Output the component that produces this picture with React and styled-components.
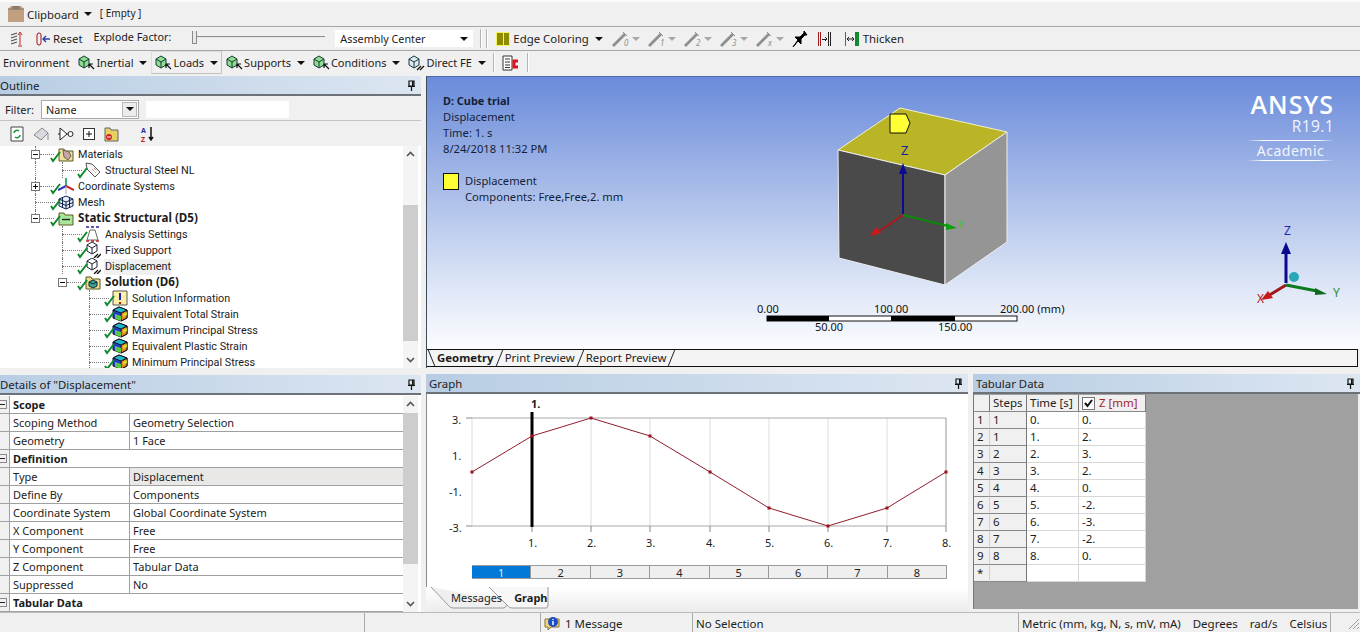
import React from "react";
import styled, { createGlobalStyle } from "styled-components";

const Global = createGlobalStyle`
  html, body { margin: 0; padding: 0; background: #f0f0f0; }
  body { font-family: "Noto Sans", "Open Sans", sans-serif; font-size: 11px; color: #1c1c1c; }
  * { box-sizing: border-box; }
`;

const Page = styled.div`
  width: 1360px; height: 632px; overflow: hidden; display: flex; flex-direction: column; background: #f0f0f0;
`;
const ToolRow = styled.div`
  height: ${p => p.$h}px; flex: none; display: flex; align-items: center; white-space: nowrap;
  padding: 0 0 ${p => p.$pb || 0}px ${p => p.$pl || 0}px;
  border-bottom: ${p => (p.$line ? "1px solid #a6a6a6" : "none")};
  border-top: ${p => (p.$top ? "2px solid #fafafa" : "none")};
  font-size: ${p => p.$fs || 11.4}px;
`;
const Gap = styled.span`
  flex: none; width: ${p => p.$w}px;
`;
const SmallLabel = styled.span`
  font-size: ${p => p.$fs || 10.8}px; position: relative; top: ${p => -p.$up}px;
`;
const Arrow = styled.span`
  flex: none; width: 0; height: 0; margin-left: ${p => p.$ml ?? 6}px;
  border-left: 4px solid transparent; border-right: 4px solid transparent;
  border-top: 4px solid ${p => (p.$off ? "#a8a8a8" : "#111")};
`;
const Sep = styled.span`
  flex: none; width: 1px; height: 19px; background: #b4b4b4; box-shadow: 1px 0 0 #fff;
`;
const ToolBox = styled.span`
  flex: none; display: inline-flex; align-items: center; height: 23px; padding: 0 3px;
  border-right: 1px solid ${p => (p.$on ? "#c0c0c0" : "transparent")};
  border-left: 1px solid ${p => (p.$on ? "#dcdcdc" : "transparent")};
  border-bottom: 1px solid ${p => (p.$on ? "#c0c0c0" : "transparent")};
  border-top: 1px solid ${p => (p.$on ? "#dcdcdc" : "transparent")};
`;
const Slider = styled.div`
  flex: none; position: relative; width: 133px; height: 2px; background: #8f8f8f; border-bottom: 1px solid #e8e8e8; top: -2px;
  &::before { content: ""; position: absolute; left: 0; top: -5px; width: 3px; height: 12px; background: #e9e9e9; border: 1px solid #8a8a8a; border-top: none; }
`;
const Combo = styled.div`
  flex: none; width: ${p => p.$w}px; height: ${p => p.$h || 17}px; background: #fff; display: flex; align-items: center;
  justify-content: space-between; padding: 0 5px 0 ${p => p.$pad || 5}px; font-size: 10.8px;
  border: ${p => (p.$border ? "1px solid #a8a8a8" : "none")};
`;
const ComboButton = styled.span`
  display: flex; align-items: center; justify-content: center; width: 15px; height: 15px; background: #ececec;
  margin-right: -4px; border: 1px solid #b8b8b8;
`;

const Main = styled.div`
  flex: none; height: 536px; display: flex; gap: 5px;
`;
const Column = styled.div`
  flex: none; width: ${p => p.$w}px; display: flex; flex-direction: column; gap: ${p => p.$gap}px;
`;
const Panel = styled.section`
  flex: ${p => (p.$h || p.$w ? "none" : 1)}; height: ${p => (p.$h ? p.$h + "px" : "auto")}; width: ${p => (p.$w ? p.$w + "px" : "auto")};
  min-width: 0; min-height: 0; display: flex; flex-direction: column; overflow: hidden;
`;
const PanelHead = styled.header`
  flex: none; height: 20px; display: flex; align-items: center; justify-content: space-between; padding: 0 5px 0 ${p => p.$pl ?? 3}px;
  background: linear-gradient(90deg, #b8cde4 0%, #dce6f1 100%); border-bottom: 2px solid #6d7278; font-size: 11.4px; color: #222;
`;
const FilterRow = styled.div`
  flex: none; height: 25px; display: flex; align-items: center; padding: 2px 0 0 5px; gap: 7px; border-bottom: 1px solid #c4c4c4;
`;
const FilterBox = styled.div`
  flex: none; width: 143px; height: 17px; background: #fff;
`;
const IconBar = styled.div`
  flex: none; height: 25px; display: flex; align-items: center; padding-left: 10px; gap: 9px;
`;
const SortIcon = styled.svg`
  overflow: visible;
`;
const ScrollArea = styled.div`
  flex: 1; min-height: 0; display: flex; background: #fff; padding-top: ${p => p.$pt || 0}px;
`;
const TreeBody = styled.div`
  flex: 1; min-width: 0; overflow: hidden; position: relative; font-family: Roboto, "Noto Sans", sans-serif; font-size: 10.8px;
`;
const TreeRow = styled.div`
  height: 16px; display: flex; align-items: center; padding-left: ${p => p.$x}px; position: relative; white-space: nowrap;
  font-weight: ${p => (p.$bold ? 700 : 400)};
  font-family: ${p => (p.$bold ? '"Noto Sans", sans-serif' : "inherit")};
  font-size: ${p => (p.$bold ? "11.6px" : "inherit")};
`;
const TreeLabel = styled.span`
  position: relative; top: ${p => (p.$bold ? 0 : 1)}px; margin-left: 3px; padding: 0 1px; line-height: 16px; background: ${p => (p.$sel ? "#f0f0f0" : "transparent")};
`;
const VGuide = styled.span`
  position: absolute; left: ${p => p.$x}px; top: 0; height: ${p => (p.$half ? 8 : 16)}px; border-left: 1px dotted #777;
`;
const HGuide = styled.span`
  position: absolute; left: ${p => p.$x}px; top: 8px; width: ${p => p.$w}px; border-top: 1px dotted #777;
`;
const Expander = styled.span`
  position: absolute; left: ${p => p.$x}px; top: 4px; width: 9px; height: 9px; background: #fff; border: 1px solid #777;
  &::before { content: ""; position: absolute; left: 1px; top: 3px; width: 5px; height: 1px; background: #111; }
  &::after { content: ""; display: ${p => (p.$plus ? "block" : "none")}; position: absolute; left: 3px; top: 1px; width: 1px; height: 5px; background: #111; }
`;
const IconSlot = styled.span`
  position: relative; flex: none; width: 16px; height: 16px; display: block;
`;
const Tick = styled.svg`
  position: absolute; left: -8px; top: 5px;
`;
const Scroll = styled.div`
  flex: none; width: 15px; margin-right: ${p => p.$mr || 0}px; position: relative; background: #f4f4f4; display: flex; flex-direction: column; justify-content: space-between; align-items: center;
`;
const ScrollThumb = styled.div`
  position: absolute; left: 0; right: 0; top: ${p => p.$top}px; height: ${p => p.$h}px; background: #cdcdcd;
`;
const ScrollBtn = styled.svg`
  position: relative; margin: 5px 0;
`;

const DetailsTable = styled.div`
  flex: 1; min-width: 0; overflow: hidden;
`;
const DetailRow = styled.div`
  height: 18px; display: grid; grid-template-columns: 10px 120px 1fr; align-items: stretch; border-bottom: 1px solid #a0a0a0;
`;
const Gutter = styled.div`
  background: #f0f0f0; display: flex; align-items: center; border-right: 1px solid #a0a0a0; position: relative;
`;
const Minus = styled.span`
  width: 7px; height: 9px; border: 1px solid #8a8a8a; border-left: none; position: relative;
  &::before { content: ""; position: absolute; left: 0; top: 3px; width: 5px; height: 1px; background: #222; }
`;
const Cell = styled.div`
  padding-left: ${p => p.$pl ?? 3}px; line-height: 17px; overflow: hidden; white-space: nowrap;
  grid-column: ${p => (p.$span ? "2 / 4" : "auto")};
  font-weight: ${p => (p.$bold ? 700 : 400)};
  background: ${p => (p.$sel ? "#e9e8e6" : "#fff")};
  border-right: ${p => (p.$line ? "1px solid #a0a0a0" : "none")};
`;

const Viewport = styled.section`
  height: 292px; display: flex; flex-direction: column; border-left: 1px solid #3f4a5a; border-top: 1px solid #4f6aa8;
`;
const Canvas = styled.div`
  flex: none; height: 272px; position: relative; overflow: hidden; padding: 16px 0 0 16px; line-height: 16px;
  background: linear-gradient(180deg, #6a8bdb 0%, #a7bbe8 40%, #dbe4f6 75%, #fbfcfe 100%);
  color: #131f38; font-size: 11.2px;
`;
const ViewSvg = styled.svg`
  position: absolute; left: 0; top: 0;
`;
const AnnoTitle = styled.div`
  font-weight: 700; font-size: 10.9px;
`;
const Legend = styled.div`
  display: flex; gap: 6px; margin-top: 16px;
`;
const Swatch = styled.span`
  flex: none; width: 16px; height: 17px; background: #ffff33; border: 1px solid #111;
`;
const Logo = styled.div`
  position: absolute; right: 26px; top: 14px; width: 87px; text-align: right; color: #fff;
`;
const LogoName = styled.div`
  font-size: 25px; line-height: 26px; font-family: "Open Sans", sans-serif; letter-spacing: 1px; font-weight: 600;
`;
const LogoVer = styled.div`
  font-size: 15.5px; line-height: 16px; margin-top: 1px; font-family: "Open Sans", sans-serif; letter-spacing: .4px; color: #f1f4fc;
`;
const LogoEdition = styled.div`
  margin-top: 6px; height: 21px; text-align: center; font-size: 14px; line-height: 19px; letter-spacing: .5px; color: #f1f4fc;
  border-top: 1px solid; border-bottom: 1px solid; border-image: linear-gradient(90deg, transparent, #fff 20%, #fff 80%, transparent) 1;
`;
const ViewTabs = styled.div`
  flex: none; height: 18px; display: flex; align-items: center; background: #f4f4f4; border: 1px solid #111; border-left: none; margin-right: 2px;
  padding-left: 7px; font-size: 11.4px;
`;
const ViewTab = styled.span`
  position: relative; padding: 0 8px 0 3px; line-height: 16px; font-weight: ${p => (p.$on ? 700 : 400)}; white-space: nowrap;
  &::after { content: ""; position: absolute; right: 2px; top: 0; height: 16px; border-right: 1px solid #222; transform: skewX(-22deg); }
  &::before { content: ""; display: ${p => (p.$on ? "block" : "none")}; position: absolute; left: -3px; top: 0; height: 16px; border-left: 1px solid #222; transform: skewX(22deg); }
`;

const BottomRow = styled.div`
  flex: 1; min-height: 0; display: flex; gap: 5px;
`;
const GraphBody = styled.div`
  flex: none; height: 193px; background: #fff; border-left: 1px solid #8a8a8a;
`;
const ChartSvg = styled.svg`
  display: block;
`;
const StepBar = styled.div`
  display: flex; margin: 1px 0 0 45px; width: 475px; height: 14px; border: 1px solid #9a9a9a; border-left: none;
`;
const StepCell = styled.span`
  flex: 1; display: flex; align-items: center; justify-content: center; font-size: 11px; line-height: 1;
  background: ${p => (p.$on ? "#0078d7" : "#efefef")}; color: ${p => (p.$on ? "#dfeeff" : "#222")};
  border-right: 1px solid #9a9a9a;
  &:last-child { border-right: none; }
`;
const BottomTabs = styled.div`
  flex: 1; position: relative; display: flex; align-items: flex-start; padding: 2px 0 0 25px; background: linear-gradient(#fff, #ececec); font-size: 11px;
`;
const TabShapes = styled.svg`
  position: absolute; left: 0; top: 0;
`;
const BottomTab = styled.span`
  position: relative; line-height: 18px; margin-right: ${p => (p.$on ? 0 : 12)}px; font-weight: ${p => (p.$on ? 700 : 400)};
`;

const TabWrap = styled.div`
  flex: 1; background: #a0a0a0; overflow: hidden; display: flex; flex-direction: column; margin: 0 2px 3px 0; padding-top: 1px; border-left: 1px solid #777;
`;
const DataGrid = styled.div`
  width: 172px; display: grid; grid-template-columns: 16px 37px 52px 67px; grid-auto-rows: 17px; font-size: 11.5px; background: #fff;
`;
const HeadCell = styled.div`
  background: #f0f0f0; border-right: 1px solid ${p => (p.$dark ? "#777" : "#d0d0d0")}; border-bottom: 1px solid #888; line-height: 16px; padding-left: ${p => p.$pl ?? 3}px;
  color: ${p => (p.$red ? "#a5262a" : "#222")}; display: flex; align-items: center; gap: 4px; white-space: nowrap;
`;
const DataCell = styled.div`
  background: #fff; border-right: 1px solid #d8d8d8; border-bottom: 1px solid #d8d8d8; line-height: 16px; padding-left: 3px;
`;
const CheckBox = styled.span`
  width: 13px; height: 13px; border: 1px solid #777; background: #fff; display: flex; align-items: center; justify-content: center; margin-left: 1px;
`;

const Status = styled.footer`
  flex: 1; display: flex; align-items: stretch; font-size: 11.5px; border-top: 1px solid #bbb; background: #f0f0f0; white-space: nowrap;
`;
const StatusCell = styled.div`
  flex: none; width: ${p => p.$w}px; border-left: ${p => (p.$line ? "1px solid #a9a9a9" : "none")}; display: flex; align-items: center; padding: 2px 0 0 ${p => p.$pl ?? 3}px; gap: ${p => p.$gap || 0}px;
  justify-content: ${p => (p.$end ? "flex-end" : "flex-start")};
`;

/* ---- icons ---- */
const LoadIcon = ({ direct }) => (
  <svg width="17" height="17" viewBox="0 0 17 17">
    <path d="M1 5l5-3 5 3v6l-5 3-5-3z" fill={direct ? "#dfe7ef" : "#8fdc8f"} stroke="#143a3a" />
    <path d="M1 5l5 3 5-3M6 8v6" fill="none" stroke="#143a3a" />
    {direct ? <path d="M9 16l4-4M12 16l4-4" stroke="#111" strokeWidth="1.3" /> : <path d="M11 10l5 5M11 10v4M11 10h4" stroke="#111" strokeWidth="1.2" fill="none" />}
  </svg>
);
const OffEdge = ({ n }) => (
  <svg width="20" height="16" viewBox="0 0 20 16">
    <path d="M1 15L13 3" stroke="#8f8f8f" strokeWidth="2.8" />
    <path d="M11 1l4 4" stroke="#8f8f8f" />
    <text x="12" y="15" fontSize="8" fontStyle="italic" fill="#8f8f8f" fontFamily="Noto Sans, sans-serif">{n}</text>
  </svg>
);
const ArrowCheck = () => (
  <Tick width="12" height="12" viewBox="0 0 12 12"><path d="M1 7l2 3 7-9" fill="none" stroke="#118a2e" strokeWidth="2" /></Tick>
);
const Chev = ({ up }) => (
  <ScrollBtn width="9" height="6" viewBox="0 0 9 6"><path d={up ? "M1 5l3.5-3.5L8 5" : "M1 1l3.5 3.5L8 1"} fill="none" stroke="#555" strokeWidth="1.6" /></ScrollBtn>
);
const Pin = () => (
  <svg width="9" height="11" viewBox="0 0 9 11"><path d="M2 1h5v5H2zM1 6.5h7M4.5 7v4" fill="none" stroke="#111" strokeWidth="1.2" /><path d="M5 1h1.5v5H5z" fill="#111" /></svg>
);
const Folder = ({ fill, children }) => (
  <svg width="16" height="16" viewBox="0 0 16 16">
    <path d="M1 3h5l1 2h8v10H1z" fill={fill} stroke="#5a5a22" />
    {children}
  </svg>
);
const treeIcons = {
  materials: <Folder fill="#efdf9a"><path d="M5 4l6 2 2 4-3 4-4-3z" fill="#c9a4a4" stroke="#665" /></Folder>,
  tag: <svg width="16" height="16" viewBox="0 0 16 16"><path d="M1 1l6 1 8 8-5 5-8-8z" fill="#f7f7f7" stroke="#555" /><path d="M7 7l4 4M9 6l3 3" stroke="#b55" strokeDasharray="1 1" /></svg>,
  coord: <svg width="16" height="16" viewBox="0 0 16 16"><path d="M8 8V0" stroke="#2aa070" strokeWidth="1.8" /><path d="M8 8L0 12" stroke="#2233bb" strokeWidth="2" /><path d="M8 8l8 4" stroke="#cc2222" strokeWidth="2" /><path d="M8 8v8" stroke="#aaa" /></svg>,
  mesh: <svg width="16" height="16" viewBox="0 0 16 16"><path d="M1 5l7-3 7 3v7l-7 3-7-3z" fill="#e8eefa" stroke="#11224a" /><path d="M1 5l7 3 7-3M8 8v7M4.5 3.5v10M11.5 3.5v10M1 8.5l7 3 7-3" fill="none" stroke="#11224a" /></svg>,
  static: <Folder fill="#a9e59a"><path d="M4 9.5h8" stroke="#222" strokeWidth="1.4" /></Folder>,
  analysis: <svg width="16" height="16" viewBox="0 0 16 16"><path d="M1 1h3M6 1h3M11 1h3" stroke="#22229a" strokeWidth="1.5" /><path d="M2 14L5 4h5l3 10M2 14h11" fill="none" stroke="#666" /><path d="M1 15h3M6 15h3M11 15h3" stroke="#b22" strokeWidth="1.5" /></svg>,
  support: <svg width="16" height="16" viewBox="0 0 16 16"><path d="M2 3l5-3 5 3v6l-5 3-5-3z" fill="#fff" stroke="#223" /><path d="M2 3l5 3 5-3M7 6v6" fill="none" stroke="#223" /><path d="M9 16l4-4M12 16l4-4" stroke="#111" strokeWidth="1.4" /></svg>,
  solution: <Folder fill="#f0dc8c"><path d="M4 8l4-2 4 2v4l-4 2-4-2z" fill="#3aa88c" stroke="#124" /><path d="M4 8l4 2 4-2" fill="none" stroke="#124" /></Folder>,
  info: <svg width="16" height="16" viewBox="0 0 16 16"><path d="M1 1h14v14H1z" fill="#fdf0a6" stroke="#555" /><path d="M8 3v7" stroke="#1a22c0" strokeWidth="2" /><path d="M8 12v2" stroke="#b11" strokeWidth="2" /></svg>,
  result: <svg width="16" height="16" viewBox="0 0 16 16"><path d="M1 4l6-3 8 3v8l-6 3-8-3z" fill="#1f3fd0" stroke="#112" /><path d="M9 7l6-3v8l-6 3z" fill="#e88b1c" stroke="#112" /><path d="M1 4l8 3 6-3-8-3z" fill="#22b8c8" stroke="#112" /><path d="M3 8l6 2v5l-6-2z" fill="#58c848" /><path d="M11 8l4-2v3l-4 2z" fill="#d8d828" /></svg>,
};

const treeData = [
  { l: "Materials", x: 58, icon: "materials", exp: 31, g: [35] },
  { l: "Structural Steel NL", x: 85, icon: "tag", g: [35, 62], h: [62, 20] },
  { l: "Coordinate Systems", x: 58, icon: "coord", exp: 31, plus: true, g: [35] },
  { l: "Mesh", x: 58, icon: "mesh", g: [35], h: [35, 20] },
  { l: "Static Structural (D5)", x: 58, icon: "static", bold: true, exp: 31, half: true },
  { l: "Analysis Settings", x: 85, icon: "analysis", g: [62], h: [62, 20] },
  { l: "Fixed Support", x: 85, icon: "support", g: [62], h: [62, 20] },
  { l: "Displacement", x: 85, icon: "support", sel: true, g: [62], h: [62, 20] },
  { l: "Solution (D6)", x: 85, icon: "solution", bold: true, exp: 58 },
  { l: "Solution Information", x: 112, icon: "info", g: [89], h: [89, 20] },
  { l: "Equivalent Total Strain", x: 112, icon: "result", g: [89], h: [89, 20] },
  { l: "Maximum Principal Stress", x: 112, icon: "result", g: [89], h: [89, 20] },
  { l: "Equivalent Plastic Strain", x: 112, icon: "result", g: [89], h: [89, 20] },
  { l: "Minimum Principal Stress", x: 112, icon: "result", g: [89], h: [89, 20] },
];

const details = [
  { h: "Scope" },
  { k: "Scoping Method", v: "Geometry Selection" },
  { k: "Geometry", v: "1 Face" },
  { h: "Definition" },
  { k: "Type", v: "Displacement", sel: true },
  { k: "Define By", v: "Components" },
  { k: "Coordinate System", v: "Global Coordinate System" },
  { k: "X Component", v: "Free" },
  { k: "Y Component", v: "Free" },
  { k: "Z Component", v: "Tabular Data" },
  { k: "Suppressed", v: "No" },
  { h: "Tabular Data" },
];

const tab = [["1", "1", "0.", "0."], ["2", "1", "1.", "2."], ["3", "2", "2.", "3."], ["4", "3", "3.", "2."], ["5", "4", "4.", "0."], ["6", "5", "5.", "-2."], ["7", "6", "6.", "-3."], ["8", "7", "7.", "-2."], ["9", "8", "8.", "0."], ["*", "", "", ""]];

const chartPts = [[472, 472], [532, 436], [591, 418], [650, 436], [710, 472], [769, 508], [828, 526], [887, 508], [946, 472]];

function GraphChart() {
  const xs = chartPts.map(p => p[0]);
  return (
    <ChartSvg width="540" height="170" viewBox="427 394 540 170">
      {xs.map(x => <line key={x} x1={x} x2={x} y1="418" y2="526" stroke="#dcdcdc" />)}
      <path d="M472 418H946V526H472" fill="none" stroke="#a8a8a8" />
      {[418, 526].map(y => <line key={y} x1="466" x2="472" y1={y} y2={y} stroke="#888" />)}
      {xs.slice(1).map(x => <line key={x} x1={x} x2={x} y1="526" y2="532" stroke="#888" />)}
      <line x1="532" x2="532" y1="412" y2="527" stroke="#000" strokeWidth="3" />
      <polyline points={chartPts.map(p => p.join(",")).join(" ")} fill="none" stroke="#8f1d2c" />
      {chartPts.map(p => <rect key={p[0]} x={p[0] - 1.5} y={p[1] - 1.5} width="3" height="3" fill="#a01020" />)}
      <g fontSize="11" fill="#222" fontFamily="Noto Sans, sans-serif">
        <text x="531" y="408" fontWeight="700">1.</text>
        <text x="452" y="424">3.</text><text x="452" y="460">1.</text><text x="449" y="496">-1.</text><text x="449" y="532">-3.</text>
        {xs.slice(1).map((x, i) => <text key={x} x={x - 4} y="547">{i + 1}.</text>)}
      </g>
    </ChartSvg>
  );
}

function ViewDrawing() {
  return (
    <ViewSvg width="934" height="272" viewBox="427 77 934 272">
      <path d="M838 150L900 108 1007 132 945 175z" fill="#b9b526" stroke="#f4f2c8" />
      <path d="M838 150L945 175V285L839 258z" fill="#4a4a4a" stroke="#eee" />
      <path d="M945 175L1007 132V242L945 285z" fill="#959595" stroke="#eee" />
      <path d="M890 114h16l4 9-4 10h-16z" fill="#ffff33" stroke="#111" />
      <path d="M903 214V166" stroke="#0a0a96" strokeWidth="2" />
      <path d="M899 174l4-11 4 11z" fill="#0a0a96" />
      <text x="901" y="155" fontSize="13" fill="#1a1aa0" fontFamily="Noto Sans, sans-serif">Z</text>
      <path d="M903 215L878 232" stroke="#b01818" strokeWidth="2" /><path d="M870 236l6-9 5 6z" fill="#d01818" />
      <path d="M903 215L948 226" stroke="#0a8a0a" strokeWidth="2" /><path d="M957 228l-11-5v7z" fill="#0ca00c" />
      <text x="958" y="228" fontSize="10" fill="#3c3" fontFamily="Noto Sans, sans-serif">Y</text>

      <path d="M1286 283V248" stroke="#0a0a90" strokeWidth="3" />
      <path d="M1281 254l5-12 5 12z" fill="#0a0a90" />
      <text x="1284" y="235" fontSize="12" fill="#2222b0" fontFamily="Noto Sans, sans-serif">Z</text>
      <circle cx="1294" cy="277" r="5" fill="#2aa8b8" />
      <path d="M1286 285L1268 296" stroke="#a01818" strokeWidth="3" /><path d="M1261 300l7-9 5 7z" fill="#c81818" />
      <path d="M1286 285L1317 291" stroke="#0e7a1e" strokeWidth="3" /><path d="M1327 294l-12-6v7z" fill="#0e6a1e" />
      <text x="1333" y="297" fontSize="12" fill="#2a8a3a" fontFamily="Noto Sans, sans-serif">Y</text>
      <text x="1257" y="303" fontSize="12" fill="#b82020" fontFamily="Noto Sans, sans-serif">X</text>

      <rect x="767" y="316" width="250" height="5" fill="#fff" stroke="#111" />
      <rect x="767" y="316" width="62" height="5" fill="#000" />
      <rect x="891" y="316" width="64" height="5" fill="#000" />
      <g fontSize="11" fill="#111" fontFamily="Noto Sans, sans-serif">
        <text x="757" y="313">0.00</text><text x="874" y="313">100.00</text><text x="1000" y="313">200.00 (mm)</text>
        <text x="815" y="331">50.00</text><text x="938" y="331">150.00</text>
      </g>
    </ViewSvg>
  );
}

export default function App() {
  return (
    <Page>
      <Global />
      <ToolRow $h={27} $pl={8} $line $top>
        <svg width="16" height="16" viewBox="0 0 16 16"><path d="M0 3l3-3h10l3 3v13H0z" fill="#c0a080" /><path d="M0 3h16M5 0h6v3H5z" fill="#8a7a6a" stroke="#8a7a6a" /></svg>
        <Gap $w={3} />Clipboard<Arrow $ml={5} /><Gap $w={8} /><SmallLabel $up={1} $fs={10}>[ Empty ]</SmallLabel>
      </ToolRow>
      <ToolRow $h={24} $pl={10} $line>
        <svg width="13" height="16" viewBox="0 0 13 16"><path d="M1 4l6-2M1 7l6-2M1 10l6-2M1 13l6-2" stroke="#555" strokeWidth="1.3" /><path d="M10 14V3M8 4l2-3 2 3M8 15h4" stroke="#b22" fill="none" /></svg>
        <Gap $w={13} />
        <svg width="15" height="14" viewBox="0 0 15 14"><rect x="1" y="1" width="4" height="12" rx="2" fill="none" stroke="#a01010" /><path d="M14 7H7M10 4L7 7l3 3" stroke="#2a40b0" fill="none" strokeWidth="1.4" /></svg>
        <Gap $w={2} />Reset<Gap $w={11} /><SmallLabel $up={2}>Explode Factor:</SmallLabel><Gap $w={21} />
        <Slider /><Gap $w={10} />
        <Combo $w={138}>Assembly Center<Arrow $ml={0} /></Combo><Gap $w={7} /><Sep /><Gap $w={5} /><Sep /><Gap $w={9} />
        <svg width="14" height="14" viewBox="0 0 14 14"><rect width="14" height="14" fill="#f4f460" /><rect x="1" y="1" width="6" height="12" fill="#8f8b00" /><rect x="8" y="1" width="5" height="12" fill="#8f8b00" /></svg>
        <Gap $w={3} />Edge Coloring<Arrow /><Gap $w={9} />
        {["0", "1", "2", "3", "x"].map(n => (
          <React.Fragment key={n}><OffEdge n={n} /><Arrow $ml={0} $off /><Gap $w={8} /></React.Fragment>
        ))}
        <svg width="16" height="18" viewBox="0 0 16 18"><path d="M1 17l5-7-3-3 5 0 4-4 0-2 3 4-2 0-4 4 0 5-3-3z" fill="#000" stroke="#000" /></svg>
        <Gap $w={10} />
        <svg width="14" height="16" viewBox="0 0 14 16" shapeRendering="crispEdges"><path d="M.5 1v14M2.5 1v14" stroke="#a02020" /><path d="M4 8h5M7 6l2 2-2 2" stroke="#222" fill="none" /><path d="M10.5 1v14M12.5 1v14" stroke="#222" /></svg>
        <Gap $w={13} />
        <svg width="14" height="14" viewBox="0 0 14 14"><path d="M.5 0v14" stroke="#1a8a3a" /><path d="M2 7h7M2 7l2-2M2 7l2 2M9 7L7 5M9 7L7 9" stroke="#222" fill="none" /><rect x="10" y="0" width="4" height="14" fill="#138a32" /></svg>
        <Gap $w={4} />Thicken
      </ToolRow>
      <ToolRow $h={25} $pl={3} $pb={2} $fs={11}>
        Environment<Gap $w={5} />
        {[["Inertial", 0], ["Loads", 1], ["Supports", 0], ["Conditions", 0]].map(([t, on]) => (
          <ToolBox key={t} $on={on}><LoadIcon /><Gap $w={1} />{t}<Arrow $ml={6} /></ToolBox>
        ))}
        <ToolBox><LoadIcon direct /><Gap $w={1} />Direct FE<Arrow $ml={6} /></ToolBox>
        <Gap $w={3} /><Sep /><Gap $w={8} />
        <svg width="17" height="16" viewBox="0 0 17 16"><path d="M1 1h9v14H1z" fill="#fff" stroke="#333" /><path d="M3 4h5M3 7h5M3 10h5M3 12.5h5" stroke="#333" /><path d="M16 6h-4v6h4" fill="none" stroke="#e01018" strokeWidth="3" /></svg>
        <Gap $w={8} /><Sep />
      </ToolRow>
      <Main>
        <Column $w={421} $gap={7}>
          <Panel $h={292}>
            <PanelHead $pl={0}>Outline<Pin /></PanelHead>
            <FilterRow>
              Filter:
              <Combo $w={98} $h={19} $border $pad={4}>Name<ComboButton><Arrow $ml={0} /></ComboButton></Combo>
              <FilterBox />
            </FilterRow>
            <IconBar>
              <svg width="14" height="16" viewBox="0 0 14 16"><path d="M1 1h12v14H1z" fill="#fff" stroke="#444" /><path d="M4 7a3 3 0 0 1 5-2M10 9a3 3 0 0 1-5 2" fill="none" stroke="#1a9a3a" strokeWidth="1.6" /></svg>
              <svg width="16" height="14" viewBox="0 0 16 14"><path d="M1 8l8-7 6 5-7 7z" fill="#d8d8e0" stroke="#888" /><path d="M15 6v7" stroke="#888" /></svg>
              <svg width="16" height="14" viewBox="0 0 16 14"><path d="M0 7h2M2 1v12l7-6zM9 7h1" fill="#fff" stroke="#222" /><circle cx="12.5" cy="7" r="2.5" fill="#fff" stroke="#222" /></svg>
              <svg width="12" height="12" viewBox="0 0 12 12"><rect x=".5" y=".5" width="11" height="11" fill="#fff" stroke="#333" /><path d="M3 6h6M6 3v6" stroke="#111" /></svg>
              <svg width="15" height="16" viewBox="0 0 15 16"><path d="M1 2h5l1 2h7v11H1z" fill="#e8cf62" stroke="#666" /><circle cx="5" cy="11" r="3" fill="#d02020" /><path d="M3 11h4" stroke="#fff" /></svg>
              <Gap $w={3} />
              <SortIcon width="14" height="16" viewBox="0 0 14 16"><path d="M11 1v13M9 11l2 3 2-3" stroke="#111" fill="none" strokeWidth="1.5" /><text x="1" y="6.5" fontSize="7" fontWeight="700" fill="#2230a8" fontFamily="Noto Sans, sans-serif">A</text><text x="1" y="15.5" fontSize="7" fontWeight="700" fill="#c02020" fontFamily="Noto Sans, sans-serif">Z</text></SortIcon>
            </IconBar>
            <ScrollArea>
              <TreeBody>
                {treeData.map(r => (
                  <TreeRow key={r.l} $x={r.x} $bold={r.bold}>
                    {(r.g || []).map(x => <VGuide key={x} $x={x} />)}
                    {r.half && <VGuide $x={35} $half />}
                    {r.h && <HGuide $x={r.h[0]} $w={r.h[1]} />}
                    {r.exp && <HGuide $x={r.exp + 9} $w={14} />}
                    {r.exp && <Expander $x={r.exp} $plus={r.plus} />}
                    <IconSlot>{treeIcons[r.icon]}<ArrowCheck /></IconSlot>
                    <TreeLabel $sel={r.sel} $bold={r.bold}>{r.l}</TreeLabel>
                  </TreeRow>
                ))}
              </TreeBody>
              <Scroll $mr={3}><ScrollThumb $top={59} $h={136} /><Chev up /><Chev /></Scroll>
            </ScrollArea>
          </Panel>
          <Panel>
            <PanelHead $pl={0}>Details of "Displacement"<Pin /></PanelHead>
            <ScrollArea $pt={1}>
              <DetailsTable>
                {details.map(d => d.h ? (
                  <DetailRow key={d.h}><Gutter><Minus /></Gutter><Cell $span $bold>{d.h}</Cell></DetailRow>
                ) : (
                  <DetailRow key={d.k}><Gutter /><Cell $line>{d.k}</Cell><Cell $sel={d.sel}>{d.v}</Cell></DetailRow>
                ))}
              </DetailsTable>
              <Scroll $mr={3}><ScrollThumb $top={17} $h={151} /><Chev up /><Chev /></Scroll>
            </ScrollArea>
          </Panel>
        </Column>
        <Column $w={934} $gap={6}>
          <Viewport>
            <Canvas>
              <ViewDrawing />
              <AnnoTitle>D: Cube trial</AnnoTitle>
              <div>Displacement</div>
              <div>Time: 1. s</div>
              <div>8/24/2018 11:32 PM</div>
              <Legend>
                <Swatch />
                <div><div>Displacement</div><div>Components: Free,Free,2. mm</div></div>
              </Legend>
              <Logo>
                <LogoName>ANSYS</LogoName>
                <LogoVer>R19.1</LogoVer>
                <LogoEdition>Academic</LogoEdition>
              </Logo>
            </Canvas>
            <ViewTabs>
              <ViewTab $on>Geometry</ViewTab><ViewTab>Print Preview</ViewTab><ViewTab>Report Preview</ViewTab>
            </ViewTabs>
          </Viewport>
          <BottomRow>
            <Panel $w={542}>
              <PanelHead>Graph<Pin /></PanelHead>
              <GraphBody>
                <GraphChart />
                <StepBar>
                  {[1, 2, 3, 4, 5, 6, 7, 8].map(n => <StepCell key={n} $on={n === 1}>{n}</StepCell>)}
                </StepBar>
              </GraphBody>
              <BottomTabs>
                <TabShapes width="542" height="24" viewBox="0 0 542 24">
                  <path d="M5 0L23 19Q24 21 27 21H78L84 16" fill="#efefef" stroke="#999" />
                  <path d="M63 0L82 19Q83 21 86 21H120Q122 21 122 18V0" fill="#f7f7f7" stroke="#999" />
                </TabShapes>
                <BottomTab>Messages</BottomTab><BottomTab $on>Graph</BottomTab>
              </BottomTabs>
            </Panel>
            <Panel>
              <PanelHead>Tabular Data<Pin /></PanelHead>
              <TabWrap>
                <DataGrid>
                  <HeadCell $dark /><HeadCell $dark>Steps</HeadCell><HeadCell $dark>Time [s]</HeadCell>
                  <HeadCell $dark $red $pl={2}>
                    <CheckBox><svg width="9" height="9" viewBox="0 0 9 9"><path d="M1 4l2.5 3L8 1" fill="none" stroke="#111" strokeWidth="2" /></svg></CheckBox>
                    Z [mm]
                  </HeadCell>
                  {tab.map(r => (
                    <React.Fragment key={r[0]}>
                      <HeadCell>{r[0]}</HeadCell>
                      <HeadCell $dark>{r[1]}</HeadCell>
                      <DataCell>{r[2]}</DataCell>
                      <DataCell>{r[3]}</DataCell>
                    </React.Fragment>
                  ))}
                </DataGrid>
              </TabWrap>
            </Panel>
          </BottomRow>
        </Column>
      </Main>
      <Status>
        <StatusCell $w={364} />
        <StatusCell $w={176} $line />
        <StatusCell $w={152} $line $gap={4}>
          <svg width="17" height="15" viewBox="0 0 17 15"><path d="M1 3h14v8H7l-3 3v-3H1z" fill="#f4d67a" stroke="#8a7030" /><circle cx="9" cy="6" r="5" fill="#1c4ec8" /><path d="M9 3v1M9 5v4" stroke="#fff" strokeWidth="1.5" /></svg>
          1 Message
        </StatusCell>
        <StatusCell $w={326} $line>No Selection</StatusCell>
        <StatusCell $w={312} $line $pl={3} $gap={12}>
          <span>Metric (mm, kg, N, s, mV, mA)</span><span>Degrees</span><span>rad/s</span><span>Celsius</span>
        </StatusCell>
        <StatusCell $w={30} $line $end $pl={0}>
          <svg width="12" height="12" viewBox="0 0 12 12"><path d="M1 11L11 1M5 11l6-6M9 11l2-2" stroke="#999" /></svg>
        </StatusCell>
      </Status>
    </Page>
  );
}
